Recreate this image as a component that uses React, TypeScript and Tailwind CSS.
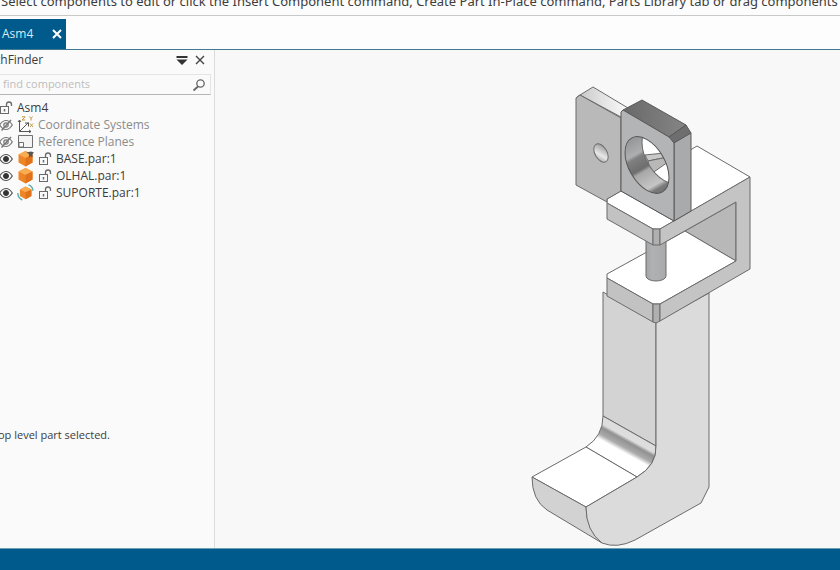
import React from 'react';

const edge = '#6b6b6b';

function LockIcon() {
  return (
    <svg viewBox="0 0 14 14" className="h-3.5 w-3.5 shrink-0" fill="none" stroke="#6a6a6a" aria-hidden="true">
      <rect x="1.5" y="5.5" width="8" height="7" />
      <path d="M7.5 5.5V3.5a2.5 2.5 0 0 1 5 0v1.5" strokeWidth="1.3" />
      <path d="M5.5 8v2.5" strokeWidth="1.5" />
    </svg>
  );
}

function EyeIcon({ off = false }: { off?: boolean }) {
  return (
    <svg viewBox="0 0 14 14" className="h-3.5 w-3.5 shrink-0" fill="none" stroke={off ? '#777' : '#555'} aria-hidden="true">
      <path d="M.7 7Q3.5 2.500 7 2.500t6.300 4.500Q10.500 11.500 7 11.500T.7 7z" strokeWidth="1.2" />
      {off ? (
        <>
          <circle cx="7" cy="7" r="2.2" strokeWidth="1.2" />
          <path d="M2.500 12.500 12 2" strokeWidth="1.5" />
        </>
      ) : (
        <circle cx="7" cy="7" r="2.500" fill="#333" stroke="#333" />
      )}
    </svg>
  );
}

function AxesIcon() {
  return (
    <svg viewBox="0 0 17 17" className="h-[17px] w-[17px] shrink-0" fill="none" aria-hidden="true">
      <path d="M2.500 4.500v11H14M2.500 15.500l9-9M1 6l1.500-2L4 6M12 14l2 1.500-2 1.500M8 7h3.500v3.500" stroke="#555" />
      <path d="M5 .8h3.200L5 4h3.200M12.500.5 14 2.500 15.500.5M14 2.500V4.500M13 7.500l3 3.500M16 7.500 13 11" stroke="#c39a40" />
    </svg>
  );
}

function PlaneIcon() {
  return (
    <svg viewBox="0 0 17 17" className="h-[17px] w-[17px] shrink-0" fill="none" aria-hidden="true">
      <path d="M1.500 2.500h14v12h-14z" fill="#f4f4f4" stroke="#6f6f6f" />
      <path d="M2 9.500h4.500v4.500H2z" fill="#fff" stroke="#6f6f6f" />
    </svg>
  );
}

function PartIcon({ mark }: { mark?: 'pin' | 'rotate' }) {
  return (
    <svg viewBox="0 0 17 17" className="h-[17px] w-[17px] shrink-0" fill="none" aria-hidden="true">
      <g transform={mark === 'rotate' ? 'translate(1.700 1.700) scale(.82)' : undefined}>
        <path d="M8.500 1 15.500 4.500v8l-7 4-7-4v-8z" fill="#ee8526" />
        <path d="M8.500 1 15.500 4.500 8.500 8 1.500 4.500z" fill="#f9ab52" />
        <path d="M8.500 8l7-3.500v8l-7 4z" fill="#df721a" />
      </g>
      {mark === 'pin' && <path d="M9.500 2.500l4.500-1 3 1-1.500 1.500v3.500l-2-1.500-1.500 1.500v-3.500z" fill="#555" />}
      {mark === 'rotate' && (
        <path d="M11.500.8q4.500 1.500 4.300 6M.8 9q.2 5 4.500 7" stroke="#58aca9" strokeWidth="1.400" />
      )}
    </svg>
  );
}

function Assembly() {
  return (
    <svg viewBox="215 50 625 497" className="block w-full" role="img" aria-label="Assembly model" strokeLinejoin="round">
      <defs>
        <linearGradient id="backTop" x1="0" y1="0" x2="1" y2="0">
          <stop offset="0" stopColor="#c5c5c5" />
          <stop offset=".5" stopColor="#e2e2e2" />
          <stop offset="1" stopColor="#fafafa" />
        </linearGradient>
        <linearGradient id="eyeTop" x1="0" y1="0" x2="1" y2="0">
          <stop offset="0" stopColor="#696969" />
          <stop offset="1" stopColor="#858585" />
        </linearGradient>
        <linearGradient id="bore" gradientUnits="userSpaceOnUse" x1="618" y1="148" x2="648" y2="200">
          <stop offset="0" stopColor="#97989a" />
          <stop offset=".24" stopColor="#aeafb0" />
          <stop offset=".3" stopColor="#808080" />
          <stop offset=".5" stopColor="#6e6e6e" />
          <stop offset=".56" stopColor="#a8a8a8" />
          <stop offset=".84" stopColor="#c6c6c6" />
          <stop offset=".92" stopColor="#7a7a7a" />
          <stop offset="1" stopColor="#747474" />
        </linearGradient>
        <linearGradient id="pin" x1="0" y1="0" x2="1" y2="0">
          <stop offset="0" stopColor="#a4a5a7" />
          <stop offset=".3" stopColor="#b0b1b3" />
          <stop offset="1" stopColor="#a9aaac" />
        </linearGradient>
        <linearGradient id="bend" gradientUnits="userSpaceOnUse" x1="630" y1="431" x2="614" y2="460">
          <stop offset="0" stopColor="#dcdcdc" />
          <stop offset=".22" stopColor="#dedede" />
          <stop offset=".32" stopColor="#919191" />
          <stop offset=".52" stopColor="#ababab" />
          <stop offset=".66" stopColor="#fff" />
          <stop offset="1" stopColor="#fff" />
        </linearGradient>
        <linearGradient id="smallBore" x1="0" y1="0" x2="1" y2="1">
          <stop offset="0" stopColor="#8a8a8a" />
          <stop offset=".6" stopColor="#e8e8e8" />
          <stop offset="1" stopColor="#999" />
        </linearGradient>
        <clipPath id="boreClip">
          <ellipse cx="647" cy="165" rx="31" ry="18" transform="rotate(60 647 165)" />
        </clipPath>
        <clipPath id="throughClip">
          <ellipse cx="664" cy="155" rx="31" ry="18" transform="rotate(60 664 155)" />
        </clipPath>
      </defs>

      {/* Base */}
      <g stroke={edge}>
        <path d="M603 292 656 322V446L603 416z" fill="#d3d3d3" />
        <path d="M603 416 656 446Q657 465 637 477L586 447Q603 436 603 416z" fill="url(#bend)" />
        <path d="M586 447 637 477 586 507 532 477z" fill="#fff" />
        <path d="M532 477 586 507Q586 529 602 543L547 510Q532 500 532 477z" fill="#d2d2d2" />
        <path
          d="M656 322 709 293V487L701 503 635 540Q617 549 602 543 586 531 586 507L637 477Q657 465 656 446z"
          fill="#dbdbdb"
        />
      </g>

      {/* Support bracket */}
      <g stroke={edge}>
        <path d="M697 146 750 177 674 221 640 180z" fill="#fff" />
        <path d="M685 231 736 202V261z" fill="#b8b8b8" />
        <path d="M607 274 685 231 736 261 660 304H653L607 278z" fill="#fff" />
        <path d="M607 278 653 304V322L607 296z" fill="#c2c2c2" />
        <path d="M653 304H660V321L656 323 653 322z" fill="#b0b0b0" />
        <path d="M646 240V276a10 5 0 0 0 20 0V240z" fill="url(#pin)" />
        <path d="M607 199 621 191 674 221 660 229H653L607 203z" fill="#fff" />
        <path d="M607 203 653 229V245L607 219z" fill="#c2c2c2" />
        <path d="M653 229H660V245H653z" fill="#b0b0b0" />
        <path d="M660 229 750 177V269L660 321V304L736 261V202L660 245z" fill="#c4c4c4" />
      </g>

      {/* Rear plate */}
      <g stroke={edge}>
        <path d="M576 98 580 95 593 87 628 108 621 117 580 95z" fill="url(#backTop)" />
        <path d="M576 98 580 95 621 118V191L607 199V202L576 185z" fill="#b9b9b9" />
        <ellipse cx="601" cy="153" rx="10" ry="6" transform="rotate(60 601 153)" fill="url(#smallBore)" />
      </g>

      {/* Eye plate */}
      <g stroke="#595959">
        <path d="M623 110 642 100 686 125 669 137z" fill="url(#eyeTop)" />
        <path d="M669 137 686 125 691 133 674 143z" fill="#6e6e6e" />
        <path d="M674 143 691 133V211L674 221z" fill="#a9aaac" />
        <path d="M621 112 623 110 669 137 674 143V221L621 191z" fill="#b3b4b6" />
      </g>
      <g clipPath="url(#boreClip)" stroke={edge}>
        <path d="M620 130h60v70h-60z" fill="url(#bore)" stroke="none" />
        <g clipPath="url(#throughClip)">
          <path d="M620 120h70v80h-70z" fill="#fff" stroke="none" />
          <path d="M645 155 664 153 668 157 648 161z" fill="#c8c8c8" />
          <path d="M648 161 668 157V162L651 174z" fill="#b8b8b8" />
        </g>
        <ellipse cx="664" cy="155" rx="31" ry="18" transform="rotate(60 664 155)" fill="none" />
      </g>
      <ellipse cx="647" cy="165" rx="31" ry="18" transform="rotate(60 647 165)" fill="none" stroke="#555" />
    </svg>
  );
}

const parts: { name: string; mark?: 'pin' | 'rotate' }[] = [
  { name: 'BASE.par:1', mark: 'pin' },
  { name: 'OLHAL.par:1' },
  { name: 'SUPORTE.par:1', mark: 'rotate' },
];

export default function App() {
  return (
    <div className="flex min-h-screen flex-col overflow-hidden bg-[#fafafa] font-['Open_Sans','Noto_Sans',sans-serif] text-xs text-[#3c3c3c]">
      {/* Prompt bar */}
      <header className="flex h-4 items-end overflow-hidden border-b border-[#c9c9c9] bg-[#fcfcfc] pb-1.5 pl-px">
        <p className="font-['Noto_Sans',sans-serif] text-[13px] leading-4 whitespace-nowrap">
          Select components to edit or click the Insert Component command, Create Part In-Place command, Parts Library tab or drag components
        </p>
      </header>

      {/* Document tabs */}
      <nav className="flex h-[34px] items-end border-b border-[#3f7a90] bg-[#fdfdfd]">
        <div className="flex h-[30px] w-[66px] items-center justify-between bg-[#005a8b] pr-1 pl-0.5 text-white">
          <span className="text-[#d9ebf5]">Asm4</span>
          <button type="button" aria-label="Close Asm4">
            <svg viewBox="0 0 10 10" className="h-2.5 w-2.5" stroke="currentColor" strokeWidth="2">
              <path d="M1 1l8 8M9 1 1 9" />
            </svg>
          </button>
        </div>
      </nav>

      <div className="flex flex-1">
        <aside className="flex w-[215px] shrink-0 flex-col overflow-hidden border-r border-[#dcdcdc]">
          <div className="flex h-5 items-center justify-between pr-2">
            <h2 className="-ml-1">thFinder</h2>
            <div className="flex items-center gap-1.5">
              <button type="button" aria-label="Panel options">
                <svg viewBox="0 0 12 10" className="h-2.5 w-3" fill="#333">
                  <path d="M.5 1h11v2H.5zM.5 4.500h11L6 10z" />
                </svg>
              </button>
              <button type="button" aria-label="Close panel">
                <svg viewBox="0 0 12 12" className="h-3 w-3" stroke="#444" strokeWidth="1.400">
                  <path d="M2 2l8 8M10 2 2 10" />
                </svg>
              </button>
            </div>
          </div>

          <label className="mt-1 mr-[3px] flex h-[21px] items-center justify-between border border-l-0 border-[#e4e4e4] border-b-[#b5b5b5] pr-1">
            <input
              type="text"
              aria-label="Find components"
              placeholder="find components"
              className="w-40 bg-transparent pl-[3px] text-[11px] outline-none placeholder:text-[#bdbdbd]"
            />
            <svg viewBox="0 0 14 14" className="h-3.5 w-3.5" fill="none" stroke="#666" strokeWidth="1.300" aria-hidden="true">
              <circle cx="8.500" cy="5.500" r="3.700" />
              <path d="M6 8.500 1.500 12.500" strokeWidth="1.800" />
            </svg>
          </label>

          <ul className="mt-1 -ml-px leading-[17px]">
            <li className="flex items-center gap-1">
              <LockIcon />
              Asm4
            </li>
            <li className="flex items-center gap-1 text-[#8c8c8c]">
              <EyeIcon off />
              <AxesIcon />
              Coordinate Systems
            </li>
            <li className="flex items-center gap-1 text-[#8c8c8c]">
              <EyeIcon off />
              <PlaneIcon />
              Reference Planes
            </li>
            {parts.map((part) => (
              <li key={part.name} className="flex items-center gap-1">
                <EyeIcon />
                <PartIcon mark={part.mark} />
                <LockIcon />
                {part.name}
              </li>
            ))}
          </ul>

          <p className="mt-[227px] -ml-0.5 text-[11px] whitespace-nowrap">op level part selected.</p>
        </aside>

        <main className="min-w-0 flex-1 bg-[#f8f8f8]">
          <Assembly />
        </main>
      </div>

      <footer className="h-[22px] border-t border-[#6f9fb8] bg-[#005a8b]" />
    </div>
  );
}
